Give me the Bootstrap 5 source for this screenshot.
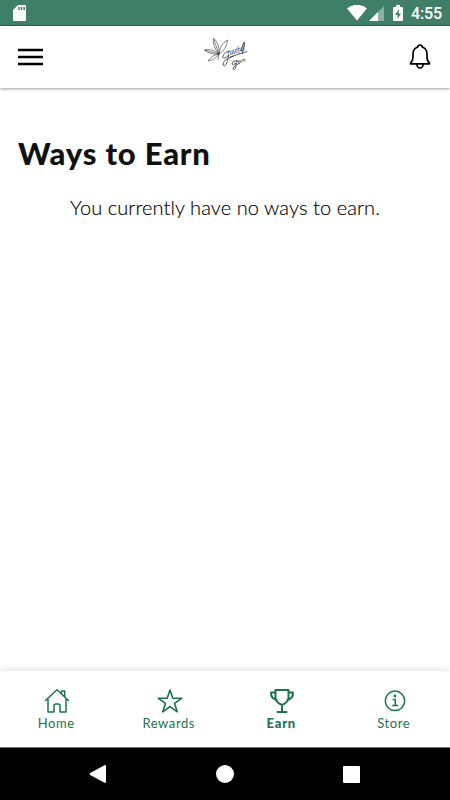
<!DOCTYPE html>
<html lang="en">
<head>
<meta charset="utf-8">
<meta name="viewport" content="width=device-width, initial-scale=1">
<title>Ways to Earn</title>
<link href="https://cdn.jsdelivr.net/npm/bootstrap@5.3.0/dist/css/bootstrap.min.css" rel="stylesheet">
<style>
  :root { --brand: #1b7350; }
  body { font-family: Lato, "Open Sans", sans-serif; color: #111; }
  svg { display: block; flex: none; }
  .status-bar { height: 26px; background: #407f67; border-bottom: 1px solid #1c6f51; padding: 2px 9px 0 13px; font: 500 16px/24px Roboto, sans-serif; }
  .wifi { margin-right: 2px; }
  .signal { margin-right: 9px; }
  .battery { margin-right: 8px; }
  .clock { width: 30px; letter-spacing: -.1px; padding-top: 1px; }
  .app-bar { height: 62px; padding: 0 19px 0 18px; box-shadow: 0 1px 3px rgba(0,0,0,.38); z-index: 1; }
  .brand-logo { margin-left: 0; margin-top: -8px; overflow: visible; }
  .bell { margin-top: -2px; }
  .page-title { font-size: 31px; line-height: 36px; font-weight: 900; margin: 47px 0 0; padding-left: 2px; letter-spacing: .8px; }
  .empty-note { font-size: 20px; line-height: 28px; font-weight: 300; letter-spacing: .08px; margin: 22px 0 0; color: #000; -webkit-text-stroke: .15px #000; }
  .tab-bar { height: 76px; box-shadow: 0 -1px 7px rgba(0,0,0,.13); padding-top: 17px; }
  .tab-bar a { color: var(--brand); font-size: 13px; line-height: 16px; letter-spacing: .6px; }
  .tab-bar svg { margin: 0 -1px 1px 1px; }
  .tab-bar .current { font-weight: 900; letter-spacing: .8px; }
  .system-nav { height: 53px; border-top: 1px solid #777; padding: 0 90px 0 89px; }
</style>
<script src="https://cdn.jsdelivr.net/npm/bootstrap@5.3.0/dist/js/bootstrap.bundle.min.js"></script>
</head>
<body class="d-flex flex-column vh-100 overflow-hidden bg-white">
  <div class="status-bar d-flex align-items-center text-white flex-shrink-0">
    <svg class="me-auto" width="14" height="18" viewBox="0 0 14 18"><path fill="#fff" d="M5 0h7q1 0 1 1v14q0 1-1 1H1q-1 0-1-1V5z"/><path stroke="#407f67" stroke-width="1.500" d="M6 2v3M8.600 2v3M11.200 2v3"/></svg>
    <svg class="wifi" width="20" height="17" viewBox="0 0 20 17"><path fill="#fff" d="M0 3.500Q10-4 20 3.500L10 15.500z"/></svg>
    <svg class="signal" width="15" height="16" viewBox="0 0 15 16"><path fill="#fff" opacity=".4" d="M15 0v15H0z"/><path fill="#fff" d="M9 6V15H0z"/></svg>
    <svg class="battery" width="10" height="17" viewBox="0 0 10 17"><path fill="#fff" d="M3 0h4v2h2q1 0 1 1v12q0 1-1 1H1q-1 0-1-1V3q0-1 1-1h2z"/><path fill="#407f67" d="M6 4 2 10h2.500v4L8 8.500H5.500z"/></svg>
    <span class="clock">4:55</span>
  </div>

  <header class="app-bar d-flex align-items-center justify-content-between position-relative bg-white flex-shrink-0">
    <svg width="25" height="18" viewBox="0 0 25 18" role="img" aria-label="Menu"><path stroke="#000" stroke-width="2.700" d="M0 2h25M0 9h25M0 16h25"/></svg>
    <svg class="brand-logo" width="46" height="36" viewBox="0 0 46 36" role="img" aria-label="Grateful Green">
      <g fill="none" stroke="#333" stroke-width=".6" stroke-linejoin="round">
        <path d="M16 19Q9 11 10.500 3Q17 9 16 19Q17 9 24.500 5Q24 14 16 19Q9 13 1.500 15Q7 20 16 19Q9 20 5 26Q12 25 16 19L15 25M16 19 11 5M16 19 1.500 15"/>
        <path stroke-width=".8" d="M27 16Q22 16 19.500 22Q21 25 26 20Q23 34 20 30Q19 25 31 21M27 22L44 16.500M35 26Q30 25 29 29Q30 31 33 28Q33 36 30 34Q30 31 37 28M38 16 41 7Q43 7 39 19"/>
      </g>
      <g font-family="Liberation Serif, serif" font-style="italic" fill="#222">
        <text transform="translate(25 21) rotate(-20)" font-size="8.500" textLength="18" lengthAdjust="spacingAndGlyphs">rateful</text>
        <text transform="translate(33 29) rotate(-14)" font-size="6.500" textLength="10" lengthAdjust="spacingAndGlyphs">reen</text>
      </g>
    </svg>
    <svg class="bell" width="22" height="25" viewBox="0 0 22 25" role="img" aria-label="Notifications"><g fill="none" stroke="#000" stroke-width="1.700" stroke-linejoin="round"><path d="M1.500 19.200Q4 17 4 13V10Q4 4.500 8.500 3.200Q9 1 11 1T13.500 3.200Q18 4.500 18 10v3q0 4 2.500 6.200v.6h-19z"/><path d="M7.700 20q.5 4 3.300 4t3.300-4"/></g></svg>
  </header>

  <main class="flex-grow-1 px-3">
    <h1 class="page-title">Ways to Earn</h1>
    <p class="empty-note text-center">You currently have no ways to earn.</p>
  </main>

  <nav class="tab-bar row g-0 bg-white text-center flex-shrink-0 position-relative">
    <a href="#" class="col d-flex flex-column align-items-center text-decoration-none">
      <svg width="26" height="26" viewBox="0 0 26 26"><path fill="none" stroke="currentColor" stroke-width="1.500" stroke-linejoin="round" stroke-linecap="round" d="M1.500 12.500 13 1.800l11.500 10.700M4 11v13h6v-6q0-2 2-2h2q2 0 2 2v6h6V11M17.500 5.500V3h3.200v5.500"/></svg>
      <span>Home</span>
    </a>
    <a href="#" class="col d-flex flex-column align-items-center text-decoration-none">
      <svg width="26" height="26" viewBox="0 0 26 26"><path fill="none" stroke="currentColor" stroke-width="1.600" stroke-linejoin="round" d="m13 2 2.800 8.300h8.900l-7.200 5.100 2.800 8.400-7.300-5.200-7.300 5.200 2.800-8.400-7.200-5.100h8.900z"/></svg>
      <span>Rewards</span>
    </a>
    <a href="#" class="col d-flex flex-column align-items-center text-decoration-none" aria-current="page">
      <svg width="26" height="26" viewBox="0 0 26 26"><path fill="none" stroke="currentColor" stroke-width="2" stroke-linejoin="round" stroke-linecap="round" d="M6.500 2h13v7.500q0 5-6.500 7.500Q6.500 14.500 6.500 9.500zM6.500 4.500H2q-.2 6 5.600 7.500M19.500 4.500H24q.2 6-5.600 7.500M13 17V24M8.500 24h9"/></svg>
      <span class="current">Earn</span>
    </a>
    <a href="#" class="col d-flex flex-column align-items-center text-decoration-none">
      <svg width="26" height="26" viewBox="0 0 26 26"><g fill="none" stroke="currentColor" stroke-width="1.500"><circle cx="13" cy="12.800" r="9.700"/><path d="M10.700 11.500h2.600v6M10.200 17.500h6"/></g><circle cx="13" cy="8" r="1.400" fill="currentColor"/></svg>
      <span>Store</span>
    </a>
  </nav>

  <div class="system-nav d-flex align-items-center justify-content-between bg-black flex-shrink-0">
    <svg width="17" height="18" viewBox="0 0 17 18"><path fill="#fff" d="M16 0q1 0 1 1v16q0 1-1 1L1.200 10q-1.200-1 0-2z"/></svg>
    <svg width="18" height="18" viewBox="0 0 18 18"><circle cx="9" cy="9" r="9" fill="#fff"/></svg>
    <svg width="17" height="17" viewBox="0 0 17 17"><rect width="17" height="17" rx="1" fill="#fff"/></svg>
  </div>
</body>
</html>
